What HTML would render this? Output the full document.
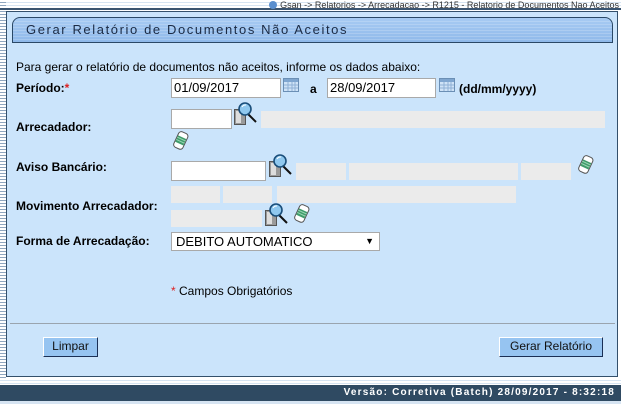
<!DOCTYPE html>
<html><head><meta charset="utf-8"><style>
*{margin:0;padding:0;box-sizing:border-box}
body{width:621px;height:404px;position:relative;overflow:hidden;background:#fff;font-family:"Liberation Sans",Arial,sans-serif;font-size:12px;color:#000}
.a{position:absolute}
.lbl{position:absolute;left:16px;font-weight:bold;font-size:12px}
.in{position:absolute;background:#fff;border:1px solid #a9a9a9;height:20px;font-size:13px;padding-left:2px;line-height:18px}
.g{position:absolute;background:#ebebeb;height:17px}
.btn{position:absolute;background:#96c4f1;border:1px solid;border-color:#fff #1a2f55 #1a2f55 #fff;font-size:12px;text-align:center;line-height:17px;height:20px;color:#111}
</style></head><body>
<!-- top stripes -->
<div class="a" style="left:0;top:0;width:621px;height:11px;background:repeating-linear-gradient(#fff 0,#fff 2px,#d6e4f2 2px,#d6e4f2 3px)"></div>
<div class="a" style="left:0;top:0;width:6px;height:404px;background:repeating-linear-gradient(#fff 0,#fff 2px,#8fa6bf 2px,#8fa6bf 3px)"></div>
<div class="a" style="left:0;top:8px;width:621px;height:2px;background:#3a5470"></div>
<div class="a" style="right:2px;top:0;font-size:9px;color:#333;line-height:10px;white-space:nowrap"><span style="display:inline-block;width:8px;height:8px;border-radius:50%;background:#5a8fcf;vertical-align:-1px;margin-right:3px"></span>Gsan -&gt; Relatorios -&gt; Arrecadacao -&gt; R1215 - Relatorio de Documentos Nao Aceitos</div>
<!-- panel -->
<div class="a" style="left:6px;top:11px;width:612px;height:366px;background:#cbe4fb;border:1px solid #34506b"></div>
<div class="a" style="left:12px;top:17px;width:601px;height:26px;background:linear-gradient(#a8cbf3,#8fb9ea);border:1px solid #2a4866;border-radius:8px 8px 0 0"></div>
<div class="a" style="left:13px;top:19px;width:599px;height:23px;background:repeating-linear-gradient(rgba(255,255,255,0) 0,rgba(255,255,255,0) 2px,rgba(255,255,255,.18) 2px,rgba(255,255,255,.18) 3px);border-radius:7px 7px 0 0"></div>
<div class="a" style="left:26px;top:22px;font-size:13px;letter-spacing:1.6px;color:#1a2a44">Gerar Relatório de Documentos Não Aceitos</div>

<div class="a" style="left:16px;top:60px;font-size:12px">Para gerar o relatório de documentos não aceitos, informe os dados abaixo:</div>
<div class="lbl" style="top:81px">Período:<span style="color:#d22">*</span></div>
<div class="in" style="left:171px;top:78px;width:110px">01/09/2017</div>
<svg class="a" style="left:283px;top:78px" width="16" height="14"><rect x=".5" y=".5" width="15" height="13" fill="#cfe3f7" stroke="#6b8fb5"/><rect x="1" y="1" width="14" height="3" fill="#7fa6d0"/><path d="M1 7h14M1 10h14M5 4v9M9 4v9M12 4v9" stroke="#8fb0d6"/></svg>
<div class="a" style="left:310px;top:82px;font-weight:bold">a</div>
<div class="in" style="left:327px;top:78px;width:109px">28/09/2017</div>
<svg class="a" style="left:439px;top:78px" width="16" height="14"><rect x=".5" y=".5" width="15" height="13" fill="#cfe3f7" stroke="#6b8fb5"/><rect x="1" y="1" width="14" height="3" fill="#7fa6d0"/><path d="M1 7h14M1 10h14M5 4v9M9 4v9M12 4v9" stroke="#8fb0d6"/></svg>
<div class="a" style="left:459px;top:82px;font-weight:bold">(dd/mm/yyyy)</div>

<div class="lbl" style="top:120px">Arrecadador:</div>
<div class="in" style="left:171px;top:109px;width:61px"></div>
<svg class="a" style="left:234px;top:102px" width="24" height="24"><rect x=".5" y="7.5" width="11" height="15" fill="#9a9a9a" stroke="#555"/><rect x="2" y="9" width="5" height="12" fill="#ddd"/><path d="M14 12l8 8" stroke="#111" stroke-width="2"/><circle cx="11" cy="7" r="6" fill="#8fc8ef" stroke="#1a4e7a" stroke-width="1.6"/><path d="M8 5a4 4 0 0 1 4-2" stroke="#fff" fill="none"/></svg>
<div class="g" style="left:261px;top:111px;width:344px"></div>
<svg class="a" style="left:172px;top:131px" width="18" height="19"><g transform="rotate(25 9 9)"><rect x="4" y="1" width="10" height="17" rx="3" fill="#fff" stroke="#555"/><rect x="4.5" y="6" width="9" height="7" fill="#3f9b6b"/><path d="M4.5 8h9M4.5 10.5h9" stroke="#9ad7b3"/></g></svg>

<div class="lbl" style="top:160px">Aviso Bancário:</div>
<div class="in" style="left:171px;top:161px;width:95px"></div>
<svg class="a" style="left:269px;top:154px" width="24" height="24"><rect x=".5" y="7.5" width="11" height="15" fill="#9a9a9a" stroke="#555"/><rect x="2" y="9" width="5" height="12" fill="#ddd"/><path d="M14 12l8 8" stroke="#111" stroke-width="2"/><circle cx="11" cy="7" r="6" fill="#8fc8ef" stroke="#1a4e7a" stroke-width="1.6"/><path d="M8 5a4 4 0 0 1 4-2" stroke="#fff" fill="none"/></svg>
<div class="g" style="left:296px;top:163px;width:50px"></div>
<div class="g" style="left:349px;top:163px;width:169px"></div>
<div class="g" style="left:521px;top:163px;width:50px"></div>
<svg class="a" style="left:577px;top:155px" width="18" height="19"><g transform="rotate(25 9 9)"><rect x="4" y="1" width="10" height="17" rx="3" fill="#fff" stroke="#555"/><rect x="4.5" y="6" width="9" height="7" fill="#3f9b6b"/><path d="M4.5 8h9M4.5 10.5h9" stroke="#9ad7b3"/></g></svg>

<div class="g" style="left:171px;top:186px;width:49px"></div>
<div class="g" style="left:223px;top:186px;width:49px"></div>
<div class="g" style="left:277px;top:186px;width:239px"></div>
<div class="lbl" style="top:199px">Movimento Arrecadador:</div>
<div class="g" style="left:171px;top:210px;width:91px"></div>
<svg class="a" style="left:265px;top:203px" width="24" height="24"><rect x=".5" y="7.5" width="11" height="15" fill="#9a9a9a" stroke="#555"/><rect x="2" y="9" width="5" height="12" fill="#ddd"/><path d="M14 12l8 8" stroke="#111" stroke-width="2"/><circle cx="11" cy="7" r="6" fill="#8fc8ef" stroke="#1a4e7a" stroke-width="1.6"/><path d="M8 5a4 4 0 0 1 4-2" stroke="#fff" fill="none"/></svg>
<svg class="a" style="left:293px;top:204px" width="18" height="19"><g transform="rotate(25 9 9)"><rect x="4" y="1" width="10" height="17" rx="3" fill="#fff" stroke="#555"/><rect x="4.5" y="6" width="9" height="7" fill="#3f9b6b"/><path d="M4.5 8h9M4.5 10.5h9" stroke="#9ad7b3"/></g></svg>

<div class="lbl" style="top:234px">Forma de Arrecadação:</div>
<div class="in" style="left:171px;top:232px;width:209px;height:19px;font-size:13px;padding-left:4px;line-height:17px">DEBITO AUTOMATICO<span style="position:absolute;right:5px;top:0;font-size:9px">▼</span></div>

<div class="a" style="left:171px;top:284px"><span style="color:#d22">*</span> Campos Obrigatórios</div>
<div class="a" style="left:10px;top:323px;width:605px;height:1px;background:#9aa4ae"></div>
<div class="btn" style="left:43px;top:337px;width:55px">Limpar</div>
<div class="btn" style="left:499px;top:337px;width:104px">Gerar Relatório</div>

<!-- footer -->
<div class="a" style="left:0;top:378px;width:621px;height:7px;background:repeating-linear-gradient(#fff 0,#fff 2px,#d6e4f2 2px,#d6e4f2 3px)"></div>
<div class="a" style="left:0;top:385px;width:621px;height:16px;background:#2f4a62"></div>
<div class="a" style="left:0;top:401px;width:621px;height:3px;background:#d6e4f2"></div>
<div class="a" style="right:6px;top:387px;font-size:10px;font-weight:bold;color:#fff;letter-spacing:1.2px;line-height:12px">Versão: Corretiva (Batch) 28/09/2017 - 8:32:18</div>
</body></html>
